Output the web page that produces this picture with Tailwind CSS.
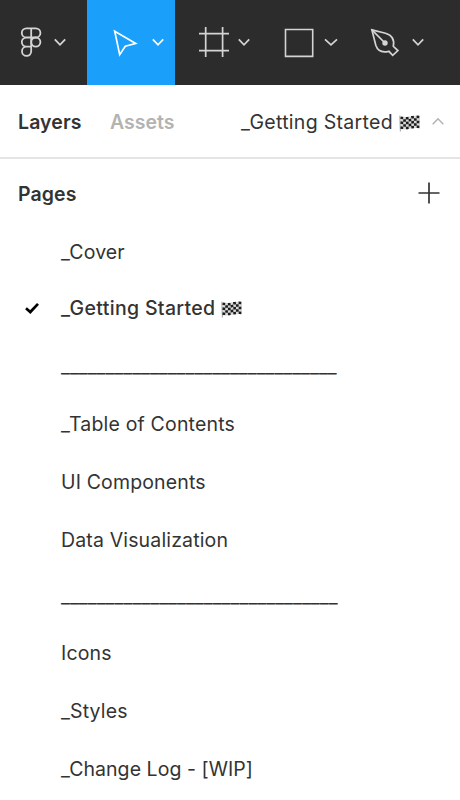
<!DOCTYPE html>
<html lang="en">
<head>
<meta charset="utf-8">
<title>Pages</title>
<script src="https://cdn.jsdelivr.net/npm/@tailwindcss/browser@4"></script>
</head>
<body class="w-[460px] h-[800px] overflow-hidden bg-white font-['Inter',sans-serif] text-[19.5px] leading-6 text-[#333333]">
<svg class="hidden">
  <symbol id="flag" viewBox="0 0 21 17">
    <path d="M1.500 1.500q4.800 1.200 9.500 0t9.500-.6V13q-4.800-.4-9.500.7t-9.500.6Z" fill="#d8d8d8"/>
    <path d="M.8 .8L1.400 16.500" stroke="#aaa" stroke-width="1.100" fill="none"/>
    <g fill="none" stroke="#1c1c1c" stroke-width="2.500" stroke-dasharray="2.700 2.700">
      <path d="M1.500 2.600q4.800 1.200 9.500 0t9.500-.6"/>
      <path d="M1.500 5.100q4.800 1 9.500 0t9.500-.6" stroke-dashoffset="2.700"/>
      <path d="M1.500 7.600q4.800 .8 9.500 0t9.500-.6"/>
      <path d="M1.500 10.100q4.800 .7 9.500-.1t9.500-.5" stroke-dashoffset="2.700"/>
      <path d="M1.500 12.600q4.800 .7 9.500-.1t9.500-.6"/>
    </g>
  </symbol>
</svg>
<header class="flex h-[85px] bg-[#2c2c2c] text-[#d4d4d4]">
  <button class="w-[87px]" aria-label="Main menu">
    <svg width="87" height="85" viewBox="0 0 87 85" fill="none" stroke="currentColor" stroke-width="1.800">
      <path d="M31.200 28.300H26.400a4.600 4.600 0 0 0 0 9.200H31.200M31.200 37.500H26.400a4.600 4.600 0 0 0 0 9.200H31.200M31.200 46.700H26.400a4.600 4.600 0 1 0 4.800 4.600ZM31.200 28.300V51.300M31.200 28.300H35.800a4.600 4.600 0 0 1 0 9.200H31.200"/>
      <circle cx="35.800" cy="42.100" r="4.600"/>
      <path d="M54.800 39.300L60 44.800L65.200 39.300"/>
    </svg>
  </button>
  <button class="w-[88px] bg-[#1a9ffb] text-white" aria-label="Move">
    <svg width="88" height="85" viewBox="87 0 88 85" fill="none" stroke="currentColor" stroke-width="1.700">
      <path d="M114.700 31.200L135.700 43.500L125.300 46.200L119.700 54.700Z"/>
      <path d="M152.800 39.300L158 44.800L163.200 39.300"/>
    </svg>
  </button>
  <button class="w-[87px]" aria-label="Frame">
    <svg width="87" height="85" viewBox="175 0 87 85" fill="none" stroke="currentColor" stroke-width="1.700">
      <path d="M205.700 27V57M222.600 27V57M199 33.600H229M199 50.600H229"/>
      <path d="M238.800 39.300L244 44.800L249.200 39.300"/>
    </svg>
  </button>
  <button class="w-[88px]" aria-label="Rectangle">
    <svg width="88" height="85" viewBox="262 0 88 85" fill="none" stroke="currentColor" stroke-width="1.600">
      <path d="M285.500 29.500H312.700V56.400H285.500Z"/>
      <path d="M325 39.300L331 44.800L337 39.300" stroke-width="1.700"/>
    </svg>
  </button>
  <button class="w-[88px]" aria-label="Pen">
    <svg width="88" height="85" viewBox="350 0 88 85" fill="none" stroke="currentColor" stroke-width="1.700">
      <path d="M371.900 29.900L385.500 33.200C391 34.800 394.800 39 393.300 46.300L397.900 50.600L392.700 55.300L388.900 51.300C382 53 377.500 50.500 375.800 45.300Z"/>
      <path d="M371.900 29.900L385 43"/>
      <circle cx="385" cy="43" r="2.700" fill="currentColor" stroke="none"/>
      <path d="M412.800 39.300L418 44.800L423.200 39.300"/>
    </svg>
  </button>
</header>
<nav class="flex h-[74px] items-center border-b-2 border-[#e5e5e5] pl-[18px] pt-px">
  <span class="w-[92px] font-semibold tracking-[0.1px]">Layers</span>
  <span class="w-[131px] font-semibold text-[#b3b3b3]">Assets</span>
  <span class="w-[158px] whitespace-nowrap tracking-[0.3px]">_Getting Started</span>
  <svg class="mt-[3px] h-[17px] w-[21px]" role="img" aria-label="Chequered flag"><use href="#flag"/></svg>
  <svg class="ml-3" width="12" height="12" viewBox="0 0 12 12" fill="none" stroke="#b3b3b3" stroke-width="1.500"><path d="M.7 8.300L6 2.800L11.300 8.300"/></svg>
</nav>
<main>
  <div class="flex h-[65px] items-center justify-between pl-[18px] pr-5 pt-[4px]">
    <h2 class="font-semibold tracking-[0.1px]">Pages</h2>
    <svg class="-mt-0.5" width="22" height="22" viewBox="0 0 22 22" stroke="#333" stroke-width="1.700"><path d="M11 .5V21.500M.5 11H21.500"/></svg>
  </div>
  <ul class="tracking-[0.15px]">
    <li class="flex h-14 items-center pl-[61px]">_Cover</li>
    <li class="flex h-14 items-center pl-6 font-medium">
      <svg class="mr-[21px]" width="16" height="16" viewBox="0 0 16 16" fill="none" stroke="#000" stroke-width="2.700"><path d="M2 8.200L6.300 12L14 3.800"/></svg>
      <span class="w-[160px] whitespace-nowrap tracking-[0.33px]">_Getting Started</span>
      <svg class="mt-[3px] h-[17px] w-[21px]" role="img" aria-label="Chequered flag"><use href="#flag"/></svg>
    </li>
    <li class="flex h-[59px] items-center pl-[61px] tracking-normal">_______________________________</li>
    <li class="flex h-[58px] items-center pl-[61px] tracking-[0.18px]">_Table of Contents</li>
    <li class="flex h-[58px] items-center pl-[61px]">UI Components</li>
    <li class="flex h-[58px] items-center pl-[61px]">Data Visualization</li>
    <li class="flex h-[55px] items-center pb-px pl-[61px] tracking-[0.03px]">_______________________________</li>
    <li class="flex h-[58px] items-center pl-[61px]">Icons</li>
    <li class="flex h-[58px] items-center pl-[61px]">_Styles</li>
    <li class="flex h-[58px] items-center pl-[61px] tracking-[0.05px]">_Change Log - [WIP]</li>
  </ul>
</main>
</body>
</html>
